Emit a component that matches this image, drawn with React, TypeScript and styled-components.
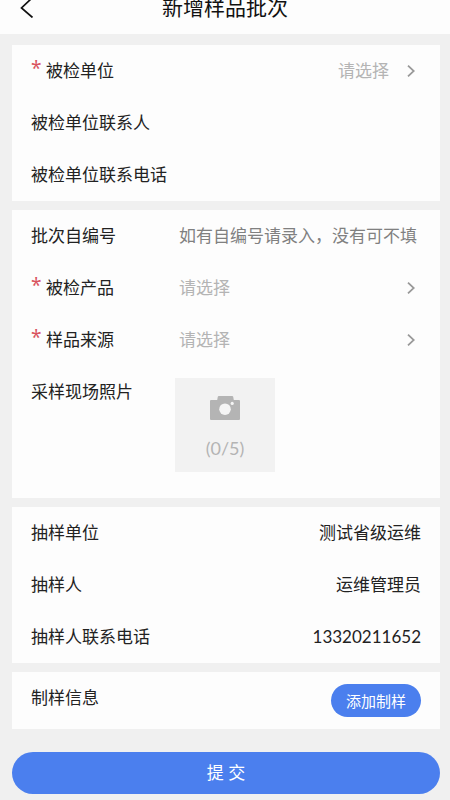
import React from "react";
import styled, { createGlobalStyle } from "styled-components";

const GlobalStyle = createGlobalStyle`
  *, *::before, *::after { box-sizing: border-box; }
  body {
    margin: 0;
    background: #f0f0f0;
    color: #222;
    font-family: Lato, "Noto Sans CJK SC", sans-serif;
    font-size: 17px;
    line-height: 24px;
  }
  button, input, select { font: inherit; margin: 0; border: 0; border-radius: 0; }
`;

const Header = styled.header`
  display: grid;
  grid-template-columns: 48px 1fr 48px;
  grid-template-rows: 14px;
  align-items: center;
  padding-bottom: 20px;
  background: #fdfdfd;
`;

const BackButton = styled.button`
  display: flex;
  align-items: center;
  height: 14px;
  padding: 0 0 0 20px;
  background: none;
  color: #111;
`;

const Title = styled.h1`
  margin: 0;
  text-align: center;
  font-size: 21px;
  line-height: 14px;
  font-weight: 400;
  color: #111;
`;

const Form = styled.form`
  display: flex;
  flex-direction: column;
  gap: 9px;
  padding: 11px 10px 6px 12px;
`;

const Card = styled.section`
  background: #fdfdfd;
`;

const Row = styled.div<{ $tall?: boolean }>`
  display: flex;
  align-items: flex-start;
  min-height: ${(p) => (p.$tall ? 132 : 52)}px;
  padding: ${(p) => (p.$tall ? "12px" : "14px")} 19px 0;
`;

const Label = styled.label<{ $column?: boolean; $low?: boolean }>`
  display: flex;
  flex: none;
  width: ${(p) => (p.$column ? "148px" : "auto")};
  padding-top: ${(p) => (p.$low ? "2px" : "0")};
`;

const Required = styled.span`
  width: 15px;
  font-family: "Noto Sans", sans-serif;
  font-size: 19px;
  line-height: 18px;
  color: #d9535f;
`;

const Value = styled.output`
  flex: 1;
  text-align: right;
`;

const TextInput = styled.input`
  flex: 1;
  min-width: 0;
  height: 24px;
  padding: 0;
  background: none;
  color: #222;
  outline: none;
  &::placeholder { color: #808080; opacity: 1; }
`;

const Picker = styled.div`
  display: flex;
  flex: 1;
  align-items: center;
  min-width: 0;
  gap: 18px;
  padding-right: 6px;
  color: #999;
`;

const Select = styled.select<{ $right?: boolean }>`
  flex: 1;
  min-width: 0;
  height: 24px;
  padding: 0;
  appearance: none;
  background: none;
  color: #b4b4b4;
  outline: none;
  text-align-last: ${(p) => (p.$right ? "right" : "left")};
`;

const Upload = styled.button`
  display: flex;
  flex-direction: column;
  align-items: center;
  gap: 16px;
  width: 100px;
  height: 94px;
  margin-left: -4px;
  padding: 18px 0 0;
  background: #f2f2f2;
  color: #b4b4b4;
  font-size: 18px;
`;

const SampleRow = styled.div`
  display: flex;
  align-items: flex-start;
  justify-content: space-between;
  padding: 12px 19px;
`;

const SectionTitle = styled.h2`
  margin: 0;
  padding-top: 2px;
  font-size: 17px;
  line-height: 24px;
  font-weight: 400;
`;

const AddButton = styled.button`
  height: 33px;
  padding: 0 15px;
  border-radius: 17px;
  background: #4b7fee;
  color: #fff;
  font-size: 15px;
`;

const Submit = styled.button`
  height: 42px;
  margin-top: 14px;
  border-radius: 21px;
  background: #4b7fee;
  color: #fff;
`;

const Chevron = () => (
  <svg width="8" height="12" viewBox="0 0 8 12" fill="none" stroke="currentColor" strokeWidth="1.8" aria-hidden="true">
    <path d="M1 .7 6.8 6 1 11.3" />
  </svg>
);

const BackIcon = () => (
  <svg width="14" height="22" viewBox="0 0 14 22" fill="none" stroke="currentColor" strokeWidth="1.7" aria-hidden="true">
    <path d="M12.5 1.5 1.5 12l11 9.5" />
  </svg>
);

const Camera = () => (
  <svg width="30" height="24" viewBox="0 0 30 24" aria-hidden="true">
    <path
      fill="currentColor"
      d="M1 4h6.2l.6-3.2q.2-.8 1-.8h13.4q.8 0 1 .8l.6 3.2H29q1 0 1 1v18q0 1-1 1H1q-1 0-1-1V5q0-1 1-1Z"
    />
    <circle cx="15" cy="13.2" r="5.8" fill="#f5f5f5" />
    <circle cx="22.2" cy="7.4" r="1.6" fill="#f5f5f5" />
  </svg>
);

type PickFieldProps = { id: string; label: string; right?: boolean };

const PickField = ({ id, label, right }: PickFieldProps) => (
  <Row>
    <Label htmlFor={id} $column={!right}>
      <Required>*</Required>
      {label}
    </Label>
    <Picker>
      <Select id={id} $right={right} required defaultValue="">
        <option value="">请选择</option>
      </Select>
      <Chevron />
    </Picker>
  </Row>
);

const InfoField = ({ id, label, value }: { id: string; label: string; value?: string }) => (
  <Row>
    <Label htmlFor={id}>{label}</Label>
    <Value id={id}>{value}</Value>
  </Row>
);

export default function App() {
  return (
    <>
      <GlobalStyle />
      <Header>
        <BackButton type="button" aria-label="返回">
          <BackIcon />
        </BackButton>
        <Title>新增样品批次</Title>
      </Header>
      <Form onSubmit={(e) => e.preventDefault()}>
        <Card>
          <PickField id="unit" label="被检单位" right />
          <InfoField id="contact" label="被检单位联系人" />
          <InfoField id="phone" label="被检单位联系电话" />
        </Card>
        <Card>
          <Row>
            <Label htmlFor="batch" $column>批次自编号</Label>
            <TextInput id="batch" placeholder="如有自编号请录入，没有可不填" />
          </Row>
          <PickField id="product" label="被检产品" />
          <PickField id="source" label="样品来源" />
          <Row $tall>
            <Label htmlFor="photos" $column $low>采样现场照片</Label>
            <Upload id="photos" type="button">
              <Camera />
              <span>(0/5)</span>
            </Upload>
          </Row>
        </Card>
        <Card>
          <InfoField id="sampling-unit" label="抽样单位" value="测试省级运维" />
          <InfoField id="sampler" label="抽样人" value="运维管理员" />
          <InfoField id="sampler-phone" label="抽样人联系电话" value="13320211652" />
        </Card>
        <Card>
          <SampleRow>
            <SectionTitle>制样信息</SectionTitle>
            <AddButton type="button">添加制样</AddButton>
          </SampleRow>
        </Card>
        <Submit type="submit">提 交</Submit>
      </Form>
    </>
  );
}
